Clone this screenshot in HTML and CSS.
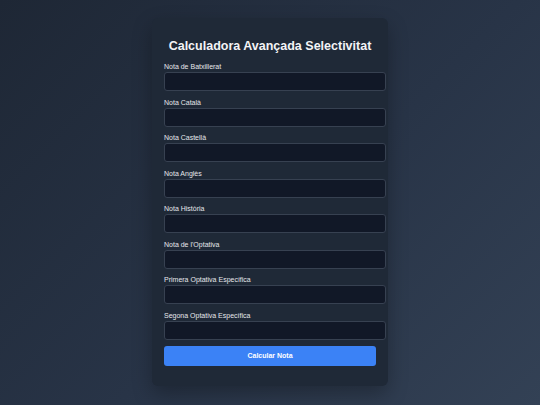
FILE: index.html
```html
<!DOCTYPE html>
<html lang="ca">
<head>
<meta charset="utf-8">
<title>Calculadora Avançada Selectivitat</title>
<link rel="stylesheet" href="styles.css">
</head>
<body>
<main class="card">
  <h1 class="title">Calculadora Avançada Selectivitat</h1>
  <form class="form">
    <div class="field"><label class="label">Nota de Batxillerat</label><input class="input" type="text"></div>
    <div class="field"><label class="label">Nota Català</label><input class="input" type="text"></div>
    <div class="field"><label class="label">Nota Castellà</label><input class="input" type="text"></div>
    <div class="field"><label class="label">Nota Anglès</label><input class="input" type="text"></div>
    <div class="field"><label class="label">Nota Història</label><input class="input" type="text"></div>
    <div class="field"><label class="label">Nota de l'Optativa</label><input class="input" type="text"></div>
    <div class="field"><label class="label">Primera Optativa Específica</label><input class="input" type="text"></div>
    <div class="field"><label class="label">Segona Optativa Específica</label><input class="input" type="text"></div>
    <button class="button" type="button">Calcular Nota</button>
  </form>
</main>
</body>
</html>
```

FILE: styles.css
```css
* { box-sizing: border-box; }
html, body { margin: 0; padding: 0; }
body {
  width: 540px;
  height: 405px;
  overflow: hidden;
  font-family: "Liberation Sans", Arial, sans-serif;
  background: linear-gradient(135deg, #1e2735 0%, #283447 55%, #334155 100%);
  padding-top: 18px;
}
.card {
  width: 236px;
  margin: 0 auto;
  background: #1f2937;
  border-radius: 6px;
  padding: 18px 12px 20.5px;
  box-shadow: 0 8px 20px rgba(0, 0, 0, 0.28);
}
.title {
  margin: 0 0 6px;
  font-size: 12.5px;
  line-height: 20px;
  font-weight: 700;
  color: #f3f4f6;
  text-align: center;
  white-space: nowrap;
}
.form { display: flex; flex-direction: column; }
.field { display: flex; flex-direction: column; margin-bottom: 6.5px; }
.field:last-of-type { margin-bottom: 6px; }
.label {
  font-size: 7px;
  line-height: 10px;
  color: #e5e7eb;
}
.input {
  width: 222px;
  height: 19px;
  background: #111827;
  border: 1px solid #374151;
  border-radius: 3px;
  padding: 0 5px;
  font: inherit;
  color: #fff;
}
.button {
  width: 212px;
  height: 20px;
  background: #3b82f6;
  border: none;
  border-radius: 3px;
  color: #fff;
  font-family: "Liberation Sans", Arial, sans-serif;
  font-size: 7px;
  font-weight: 700;
  padding: 0;
}
```
